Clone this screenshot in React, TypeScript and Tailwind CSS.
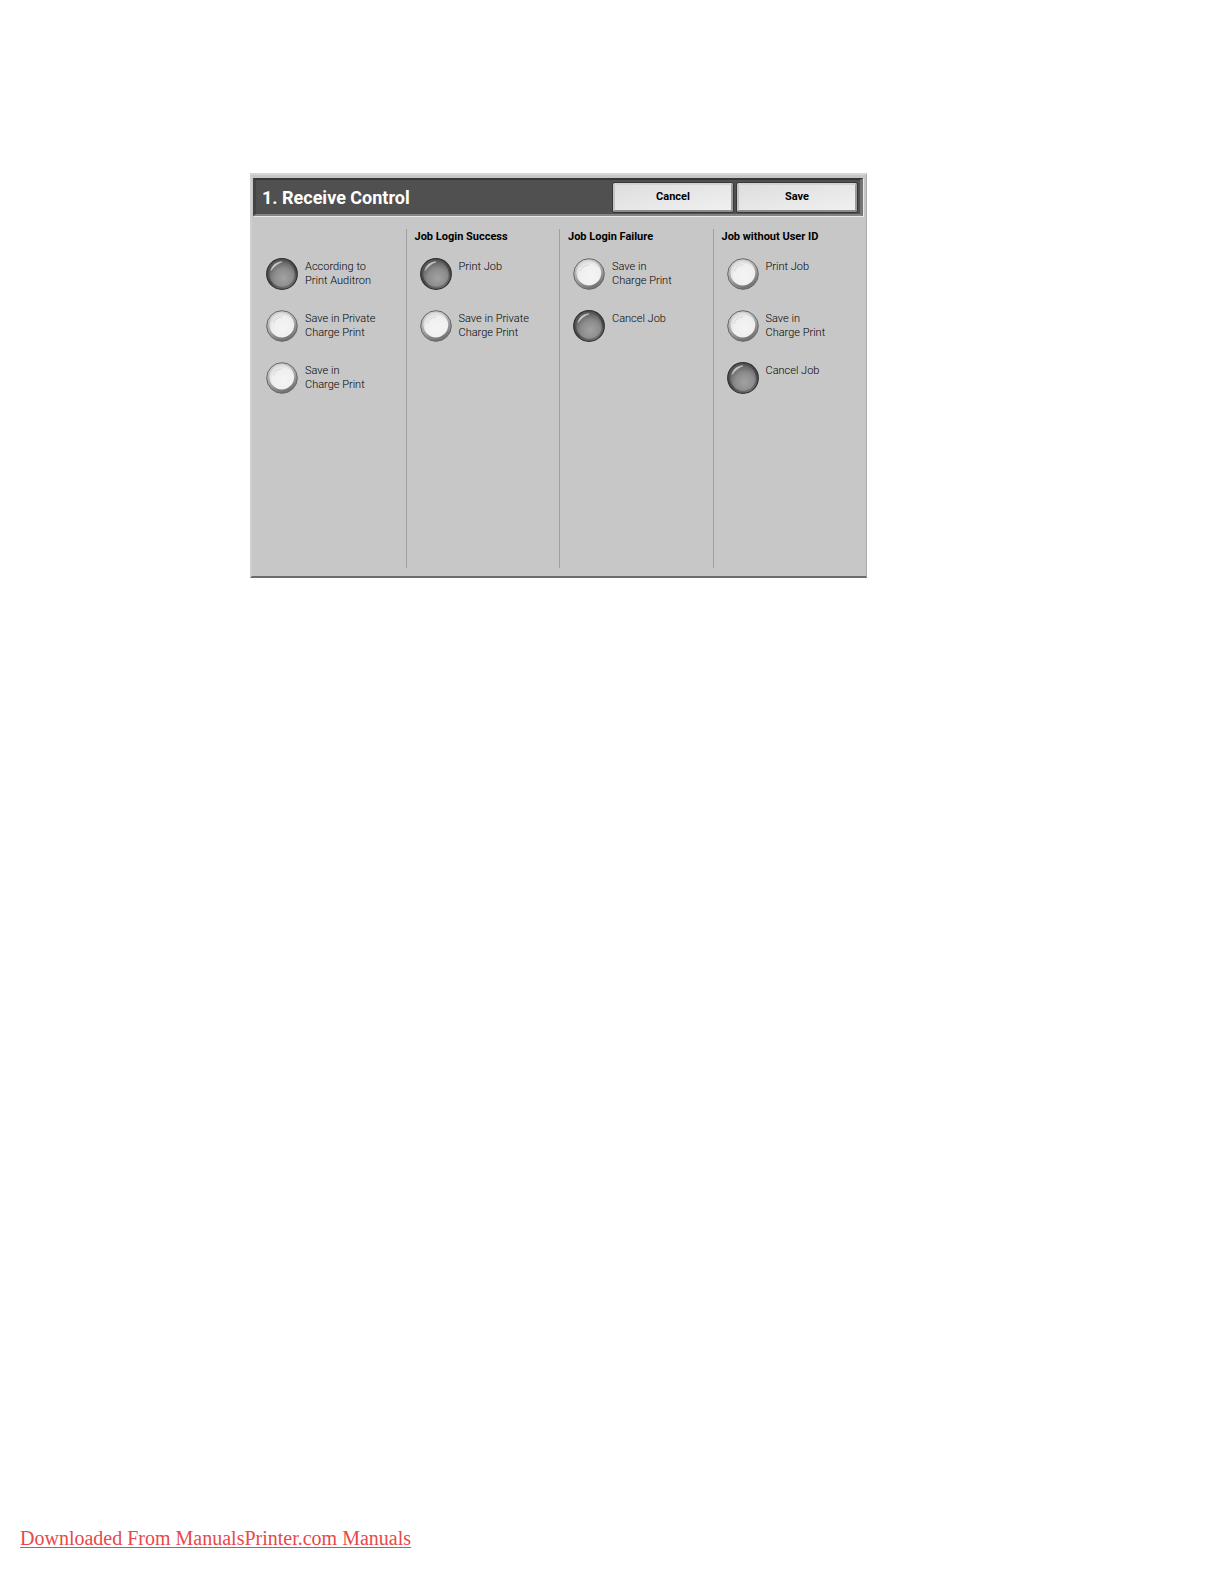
import { useState } from "react";

interface Column {
  id: string;
  title: string;
  options: string[][];
  selected: number;
}

const COLUMNS: Column[] = [
  {
    id: "auditron",
    title: "",
    options: [["According to", "Print Auditron"], ["Save in Private", "Charge Print"], ["Save in", "Charge Print"]],
    selected: 0,
  },
  {
    id: "success",
    title: "Job Login Success",
    options: [["Print Job"], ["Save in Private", "Charge Print"]],
    selected: 0,
  },
  {
    id: "failure",
    title: "Job Login Failure",
    options: [["Save in", "Charge Print"], ["Cancel Job"]],
    selected: 1,
  },
  {
    id: "no-user",
    title: "Job without User ID",
    options: [["Print Job"], ["Save in", "Charge Print"], ["Cancel Job"]],
    selected: 2,
  },
];

function Lamp({ on }: { on: boolean }) {
  return (
    <svg viewBox="0 0 32 32" className="pointer-events-none absolute inset-0 size-8" aria-hidden="true">
      <defs>
        <linearGradient id="rim-on" x1="0.2" y1="0" x2="0.7" y2="1">
          <stop offset="0" stopColor="#5c5c5c" />
          <stop offset="0.6" stopColor="#484848" />
          <stop offset="1" stopColor="#777" />
        </linearGradient>
        <radialGradient id="face-on" cx="0.56" cy="0.66" r="0.62">
          <stop offset="0" stopColor="#a2a2a2" />
          <stop offset="0.6" stopColor="#8c8c8c" />
          <stop offset="1" stopColor="#666" />
        </radialGradient>
        <linearGradient id="rim-off" x1="0.25" y1="0" x2="0.65" y2="1">
          <stop offset="0" stopColor="#d4d4d4" />
          <stop offset="0.5" stopColor="#a8a8a8" />
          <stop offset="1" stopColor="#6c6c6c" />
        </linearGradient>
        <radialGradient id="face-off" cx="0.55" cy="0.6" r="0.55">
          <stop offset="0" stopColor="#f4f4f4" />
          <stop offset="0.8" stopColor="#efefef" />
          <stop offset="1" stopColor="#dedede" />
        </radialGradient>
      </defs>
      {on ? (
        <>
          <circle cx="16" cy="16" r="15.3" fill="url(#rim-on)" stroke="#303030" strokeWidth="1.2" />
          <circle cx="16" cy="16" r="12.8" fill="url(#face-on)" />
          <path d="M5 12.5C6.5 7 10.5 4 16 3.8C12 5.5 8.5 8 5 12.5Z" fill="#c9c9c9" stroke="#c9c9c9" strokeWidth="0.6" strokeLinejoin="round" />
        </>
      ) : (
        <>
          <circle cx="16" cy="16" r="15.3" fill="url(#rim-off)" stroke="#666" strokeWidth="1" />
          <circle cx="15.8" cy="15" r="12.4" fill="url(#face-off)" />
          <path d="M7.5 13C9 9 12 7.2 17 6.8" fill="none" stroke="#d0d0d0" strokeWidth="1.5" strokeDasharray="1 1" />
        </>
      )}
    </svg>
  );
}

function OptionColumn({ column }: { column: Column }) {
  const [selected, setSelected] = useState(column.selected);

  return (
    <fieldset
      aria-label={column.title || "Receive Control"}
      className="min-w-0 border-l border-[#a0a0a0] first:border-transparent"
    >
      {column.title ? (
        <h2 className="h-4 pl-2 text-[11px] leading-4 font-bold whitespace-nowrap">{column.title}</h2>
      ) : (
        <div className="h-4" />
      )}
      <div className="mt-[13px] flex flex-col gap-5 pl-[13px]">
        {column.options.map((lines, i) => (
          <label key={i} className="flex h-8 items-start gap-[7px] text-[11px] leading-[14px] font-light whitespace-nowrap">
            <span className="relative size-8 shrink-0">
              <input
                type="radio"
                name={column.id}
                checked={selected === i}
                onChange={() => setSelected(i)}
                className="block size-8 appearance-none rounded-full"
              />
              <Lamp on={selected === i} />
            </span>
            <span className="pt-[2px]">
              {lines.map((line) => (
                <span key={line} className="block">{line}</span>
              ))}
            </span>
          </label>
        ))}
      </div>
    </fieldset>
  );
}

function HeaderButton({ label }: { label: string }) {
  return (
    <button
      type="button"
      className="h-[29px] w-[120px] rounded-xs border-2 border-t-[#d2d2d2] border-r-[#9c9c9c] border-b-[#8c8c8c] border-l-[#c4c4c4] bg-linear-to-br from-[#dedede] to-[#f0f0f0] text-[11px] font-bold shadow-[0_0_0_1px_#383838]"
    >
      {label}
    </button>
  );
}

export default function App() {
  return (
    <div className="flex min-h-screen flex-col justify-between bg-white pt-[173px] pb-8 font-['Roboto',sans-serif] text-black">
      <main className="px-[250px]">
        <section className="w-full max-w-[617px] border-t-2 border-r border-b-2 border-l-2 border-t-[#d6d6d6] border-r-[#aaa] border-b-[#6c6c6c] border-l-[#cfcfcf] bg-[#c7c7c7] pb-2">
          <header className="mr-[3px] ml-px mt-[3px] flex h-[38px] items-center justify-between border-t-2 border-r-3 border-b-2 border-l-3 border-t-[#363636] border-r-[#747474] border-b-[#858585] border-l-[#444] bg-[#505050] pr-[3px] pl-[6px] shadow-[1px_1px_0_#e8e8e8]">
            <h1 className="pt-[2px] text-[18px] leading-6 font-bold text-white">1. Receive Control</h1>
            <div className="flex gap-1">
              <HeaderButton label="Cancel" />
              <HeaderButton label="Save" />
            </div>
          </header>
          <div className="mt-[13px] grid h-[339px] grid-cols-4">
            {COLUMNS.map((column) => (
              <OptionColumn key={column.id} column={column} />
            ))}
          </div>
        </section>
      </main>
      <footer className="pl-5">
        <a
          href="#"
          className="font-['Liberation_Serif',serif] text-[20px] leading-6 text-[#e8484a] underline decoration-1 underline-offset-2"
        >
          Downloaded From ManualsPrinter.com Manuals
        </a>
      </footer>
    </div>
  );
}
